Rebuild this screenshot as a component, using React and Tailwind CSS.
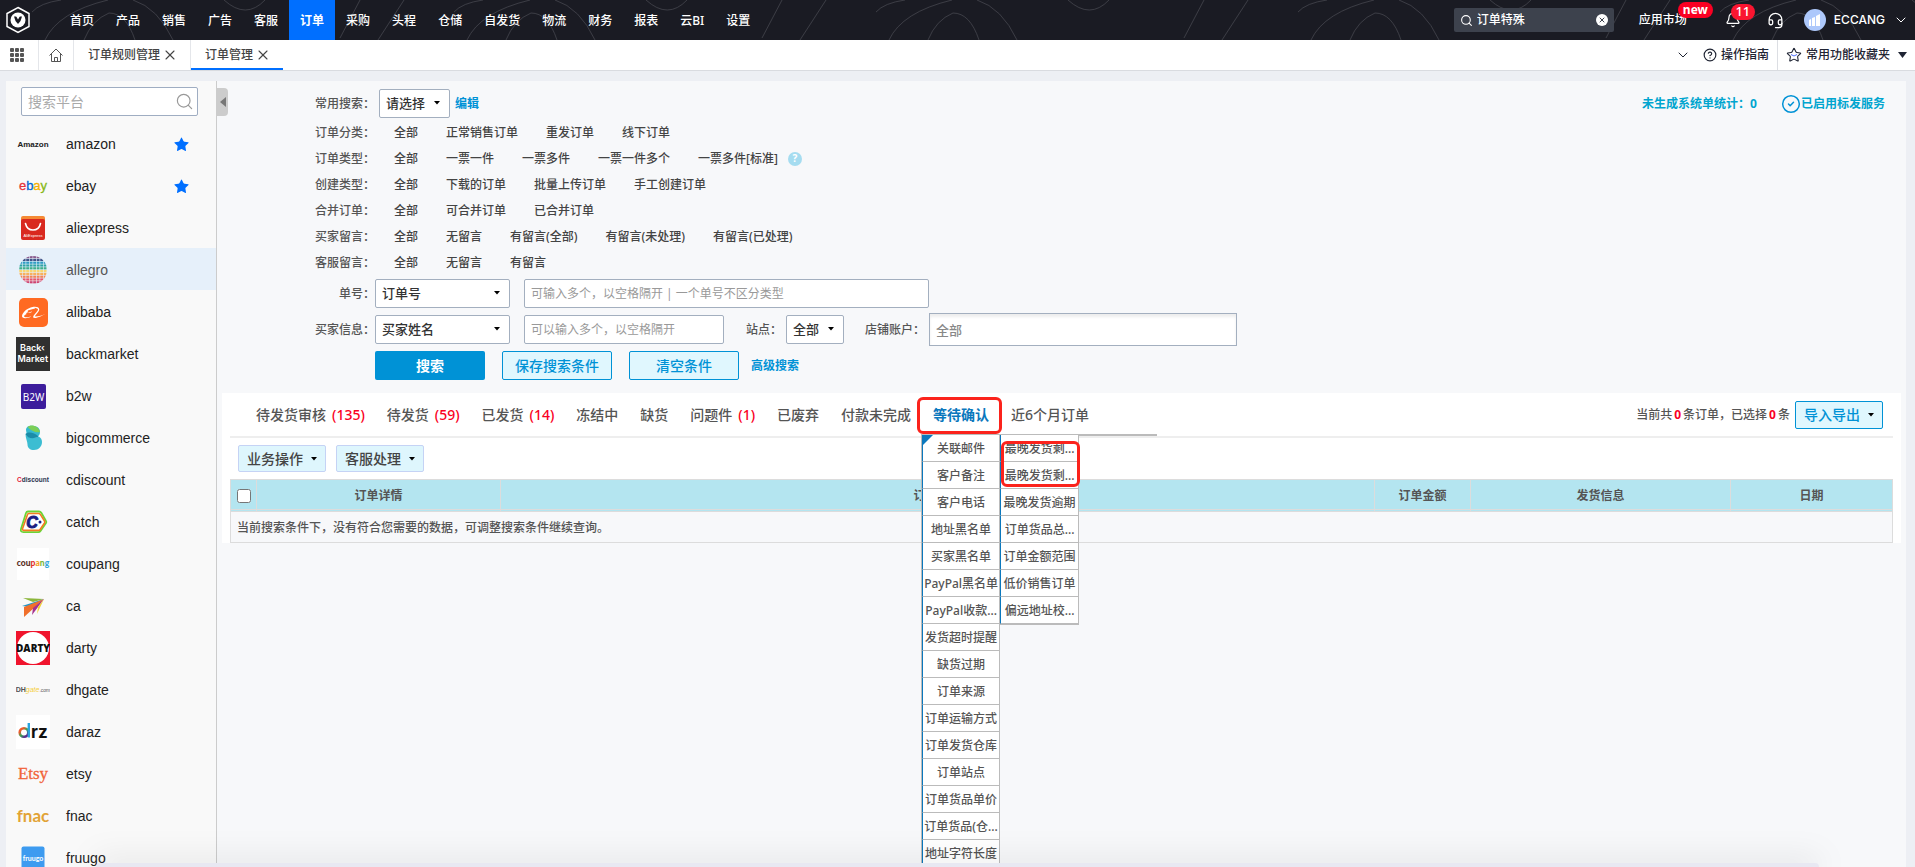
import { Bell, CheckCircle2, ChevronDown, CircleHelp, Headset, Search, Star, X } from 'lucide-react';
import { SiAlibabadotcom } from 'react-icons/si';

const NAV = ['首页', '产品', '销售', '广告', '客服', '订单', '采购', '头程', '仓储', '自发货', '物流', '财务', '报表', '云BI', '设置'];

// full-width punctuation
const COLON = '\uff1a';
const COMMA = '\uff0c';

const FILTERS = [
  { label: '订单分类', options: ['全部', '正常销售订单', '重发订单', '线下订单'] },
  { label: '订单类型', options: ['全部', '一票一件', '一票多件', '一票一件多个', '一票多件[标准]'], help: true },
  { label: '创建类型', options: ['全部', '下载的订单', '批量上传订单', '手工创建订单'] },
  { label: '合并订单', options: ['全部', '可合并订单', '已合并订单'] },
  { label: '买家留言', options: ['全部', '无留言', '有留言(全部)', '有留言(未处理)', '有留言(已处理)'] },
  { label: '客服留言', options: ['全部', '无留言', '有留言'] },
];

const STATUS_TABS = [
  { name: '待发货审核', count: 135 },
  { name: '待发货', count: 59 },
  { name: '已发货', count: 14 },
  { name: '冻结中' },
  { name: '缺货' },
  { name: '问题件', count: 1 },
  { name: '已废弃' },
  { name: '付款未完成' },
  { name: '等待确认', active: true },
  { name: '近6个月订单' },
];

const MENU_LEFT = [
  '关联邮件', '客户备注', '客户电话', '地址黑名单', '买家黑名单', 'PayPal黑名单', 'PayPal收款...', '发货超时提醒',
  '缺货过期', '订单来源', '订单运输方式', '订单发货仓库', '订单站点', '订单货品单价', '订单货品(仓...', '地址字符长度',
];

const MENU_RIGHT = ['最晚发货剩...', '最晚发货剩...', '最晚发货逾期', '订单货品总...', '订单金额范围', '低价销售订单', '偏远地址校...'];

const sans = 'Liberation Sans, sans-serif';

function Logo({ children }) {
  return (
    <svg viewBox="0 0 34 34" className="size-[34px] shrink-0" aria-hidden="true">
      {children}
    </svg>
  );
}

function AllegroLogo() {
  const colors = ['#8a5a8c', '#3f5488', '#2f9cc4', '#2fa3a6', '#3fae8c', '#f9d670', '#f8b15c', '#f0855a', '#e8566a', '#cf4470'];
  return (
    <Logo>
      <clipPath id="allegro-disc">
        <circle cx="17" cy="17" r="14" />
      </clipPath>
      <g clipPath="url(#allegro-disc)">
        {colors.map((color, row) =>
          [0, 1, 2, 3, 4, 5, 6, 7].map((col) => (
            <rect key={`${row}-${col}`} x={3.2 + col * 3.5} y={3 + row * 2.8} width="2.9" height="2.2" fill={color} />
          ))
        )}
      </g>
    </Logo>
  );
}

const PLATFORMS = [
  {
    name: 'amazon',
    starred: true,
    logo: (
      <Logo>
        <text x="17" y="20" textAnchor="middle" fontFamily={sans} fontWeight="700" fontSize="8" fill="#222">Amazon</text>
      </Logo>
    ),
  },
  {
    name: 'ebay',
    starred: true,
    logo: (
      <Logo>
        <text x="17" y="21" textAnchor="middle" fontFamily={sans} fontSize="13" strokeWidth="0.300">
          <tspan fill="#e53238" stroke="#e53238">e</tspan>
          <tspan fill="#0064d2" stroke="#0064d2">b</tspan>
          <tspan fill="#f5af02" stroke="#f5af02">a</tspan>
          <tspan fill="#86b817" stroke="#86b817">y</tspan>
        </text>
      </Logo>
    ),
  },
  {
    name: 'aliexpress',
    logo: (
      <Logo>
        <rect x="5" y="5" width="24" height="12" rx="2" fill="#f58a34" />
        <rect x="5" y="8" width="24" height="21" rx="2" fill="#d9291f" />
        <path d="M9.5 12.5c1 4.500 4 6.500 7.500 6.500s6.500-2 7.500-6.500" fill="none" stroke="#fff" strokeWidth="1.600" strokeLinecap="round" />
        <text x="17" y="26" textAnchor="middle" fontFamily={sans} fontSize="4" fill="#fff">AliExpress</text>
      </Logo>
    ),
  },
  { name: 'allegro', active: true, logo: <AllegroLogo /> },
  {
    name: 'alibaba',
    logo: (
      <span className="grid size-[34px] shrink-0 place-items-center">
        <span className="grid size-[29px] place-items-center rounded-[5px] bg-[#ff6a22]">
          <SiAlibabadotcom className="size-[23px] text-white" />
        </span>
      </span>
    ),
  },
  {
    name: 'backmarket',
    logo: (
      <Logo>
        <rect width="34" height="34" fill="#303030" />
        <g fontFamily="Inter, sans-serif" fontSize="9" fontWeight="600" fill="#fff">
          <text x="4" y="14">Back‹</text>
          <text x="1.500" y="25">Market</text>
        </g>
      </Logo>
    ),
  },
  {
    name: 'b2w',
    logo: (
      <Logo>
        <rect x="5" y="5" width="25" height="25" rx="2" fill="#3d1d9c" />
        <text x="17.5" y="21.500" textAnchor="middle" fontFamily="Noto Sans, sans-serif" fontSize="10" fill="#fff">B2W</text>
      </Logo>
    ),
  },
  {
    name: 'bigcommerce',
    logo: (
      <Logo>
        <path d="M10 9c0-4 4-5 8-4 4 .5 6 3 6 6 0 2-1 4-3 5l-10-1z" fill="#35b9cf" />
        <path d="M11.500 6c3-3 11-2 12.500 5-4 1-9-1-12.500-5z" fill="#7ccf57" />
        <path d="M9.500 13c2 4 8 5 13 2.500 2.500 1 3.500 3 3.500 5.500 0 4.500-3.500 8-8 8-4 0-6.500-2-6.500-5.500 0-3-2-6-2-10.500z" fill="#3cbdd2" />
        <path d="M9.500 13c1-2 8-3 13 2.500-5 3-11.500 2-13-2.500z" fill="#1b8ca8" />
      </Logo>
    ),
  },
  {
    name: 'cdiscount',
    logo: (
      <Logo>
        <text x="17" y="19" textAnchor="middle" fontFamily={sans} fontWeight="700" fontSize="6.500" fill="#2a3550">
          <tspan fill="#e5203a">C</tspan>discount
        </text>
      </Logo>
    ),
  },
  {
    name: 'catch',
    logo: (
      <Logo>
        <path d="M10 8q.5-1.500 2-1.500h11q1.500 0 2.300 1.200L30 16q.7 1 0 2l-5.500 8q-.8 1.200-2.300 1.200H7.500Q4 27 5 24z" fill="#fff" stroke="#6bd534" strokeWidth="1.800" />
        <path d="M11.500 9.500q.2-1 1.200-1h10q1 0 1.600.9L28.500 16q.6 1 0 2l-4.400 6.500q-.6.9-1.600.9H8q-2 0-1.400-2z" fill="#fff" stroke="#f47b20" strokeWidth="1.600" />
        <text x="16" y="22.500" textAnchor="middle" fontFamily={sans} fontWeight="700" fontStyle="italic" fontSize="16" fill="#1b1e82" stroke="#1b1e82">C</text>
        <circle cx="24" cy="17" r="1.500" fill="#1b1e82" />
      </Logo>
    ),
  },
  {
    name: 'coupang',
    logo: (
      <Logo>
        <rect x="1" y="1" width="32" height="32" fill="#fff" />
        <text x="17" y="19" textAnchor="middle" fontFamily="Lato, sans-serif" fontWeight="900" fontSize="8.500">
          <tspan fill="#5a2f24">cou</tspan>
          <tspan fill="#e2332b">p</tspan>
          <tspan fill="#f4a428">a</tspan>
          <tspan fill="#7cb83a">n</tspan>
          <tspan fill="#35a6dc">g</tspan>
        </text>
      </Logo>
    ),
  },
  {
    name: 'ca',
    logo: (
      <Logo>
        <path d="M7 9l21 1-11 3z" fill="#8cb63c" />
        <path d="M6 17l22-7-14 8z" fill="#2396c8" />
        <path d="M8 28V18l20-8z" fill="#f0702c" />
        <path d="M16 26l1-7 11-9z" fill="#a5318f" />
        <path d="M21 25l1-7 6-8z" fill="#f2d233" />
      </Logo>
    ),
  },
  {
    name: 'darty',
    logo: (
      <Logo>
        <rect width="34" height="34" fill="#f0142d" />
        <circle cx="17" cy="17" r="16" fill="#fff" />
        <text x="17" y="21" textAnchor="middle" fontFamily="Open Sans, sans-serif" fontWeight="800" fontSize="10" fill="#111">DARTY</text>
      </Logo>
    ),
  },
  {
    name: 'dhgate',
    logo: (
      <Logo>
        <text x="17" y="19" textAnchor="middle" fontFamily={sans} fontSize="7" fill="#555">
          <tspan fontWeight="700">DH</tspan>
          <tspan fill="#f5cf3d" fontStyle="italic">gate</tspan>
          <tspan fontSize="5">.com</tspan>
        </text>
      </Logo>
    ),
  },
  {
    name: 'daraz',
    logo: (
      <Logo>
        <linearGradient id="daraz-d" x1="0" y1="0" x2="1" y2="1">
          <stop offset="0.2" stopColor="#f0592b" />
          <stop offset="0.5" stopColor="#35a853" />
          <stop offset="0.8" stopColor="#5b2a90" />
        </linearGradient>
        <rect width="34" height="34" fill="#fff" />
        <circle cx="8" cy="17.500" r="4.300" fill="none" stroke="url(#daraz-d)" strokeWidth="2.600" />
        <path d="M12.800 8v14.500" stroke="#2aa4dd" strokeWidth="2.400" />
        <text x="15" y="22.500" fontFamily="Inter, sans-serif" fontWeight="700" fontSize="17" fill="#111">rz</text>
      </Logo>
    ),
  },
  {
    name: 'etsy',
    logo: (
      <Logo>
        <text x="17" y="22" textAnchor="middle" fontFamily="Liberation Serif, serif" fontSize="17" fill="#f1643a" stroke="#f1643a" strokeWidth="0.300">Etsy</text>
      </Logo>
    ),
  },
  {
    name: 'fnac',
    logo: (
      <Logo>
        <text x="17" y="23" textAnchor="middle" fontFamily="Lato, sans-serif" fontWeight="700" fontSize="17" fill="#e2a336">fnac</text>
      </Logo>
    ),
  },
  {
    name: 'fruugo',
    logo: (
      <Logo>
        <rect x="5.500" y="5.500" width="23" height="24" rx="2" fill="#3d9bf0" />
        <text x="17" y="19.500" textAnchor="middle" fontFamily="Lato, sans-serif" fontWeight="700" fontSize="7" fill="#fff">fruugo</text>
      </Logo>
    ),
  },
];

function Caret({ className = '' }) {
  return (
    <svg viewBox="0 0 6 4" className={`h-1 w-1.5 ${className}`} fill="#000" aria-hidden="true">
      <path d="M0 0h6L3 3.500z" />
    </svg>
  );
}

function Select({ label, value, className }) {
  return (
    <span className={`relative shrink-0 ${className}`}>
      <select
        aria-label={label}
        className="h-[29px] w-full appearance-none rounded-xs border border-[#a3afbf] bg-white pl-1.5 text-[13px] text-[#333] outline-none"
      >
        <option>{value}</option>
      </select>
      <Caret className="pointer-events-none absolute top-3 right-2.5" />
    </span>
  );
}

function HeaderLines() {
  return (
    <svg className="pointer-events-none absolute inset-0 h-full w-full" aria-hidden="true">
      <defs>
        <pattern id="header-lines" width="422" height="40" patternUnits="userSpaceOnUse">
          <g fill="none" stroke="#3b3c44" strokeWidth="1">
            <path d="M32 12Q40 3 61 0" />
            <path d="M84 40q8-20 25-27 17 0 26 27" />
            <path d="M133 0q25 8 40 40" />
            <path d="M45 40Q58 12 108 0" />
            <path d="M224 0q22 20 41 0" />
            <path d="M340 38L360 0" />
            <path d="M378 40L404 0" />
          </g>
        </pattern>
      </defs>
      <rect width="100%" height="100%" fill="url(#header-lines)" />
    </svg>
  );
}

function Header() {
  return (
    <header className="relative flex h-10 shrink-0 items-center bg-[#1a1b23] text-xs text-white">
      <HeaderLines />
      <a href="#" aria-label="ECCANG" className="relative ml-1.5 w-[53px]">
        <svg viewBox="0 0 24 28" className="h-7 w-6" aria-hidden="true">
          <path d="M12 1.500l11 6v13l-11 6-11-6v-13z" fill="none" stroke="#fff" strokeWidth="1.500" />
          <circle cx="12" cy="14" r="7.500" fill="#fff" />
          <path d="M8 10.500h8L14.500 15 12 18 9.500 15z" fill="#1a1b23" />
          <path d="M10 10l2 3.500 2-3.500z" fill="#fff" />
        </svg>
      </a>
      <nav className="relative flex h-full">
        {NAV.map((item) => (
          <a
            key={item}
            href="#"
            className={`flex items-center px-[11px] pt-0.5 ${item === '订单' ? 'bg-[#006fff] font-bold' : 'font-medium'}`}
          >
            {item}
          </a>
        ))}
      </nav>

      <div className="relative ml-auto flex h-full items-center pr-1.5">
        <label className="flex h-6 w-40 items-center rounded-xs bg-[#3d424d] px-1.5">
          <Search size={13} strokeWidth={2} />
          <input aria-label="搜索菜单" defaultValue="订单特殊" className="ml-1 w-0 flex-1 bg-transparent font-medium outline-none" />
          <span className="grid size-3 place-items-center rounded-full bg-white text-[#3d424d]">
            <X size={8} strokeWidth={3} />
          </span>
        </label>
        <a href="#" className="relative ml-[25px] font-medium">
          应用市场
          <span className="absolute -top-2.5 left-[39px] flex h-4 items-center rounded-full bg-[#fa0023] px-[5px] font-bold">new</span>
        </a>
        <button type="button" aria-label="通知" className="relative ml-[38px]">
          <Bell size={16} strokeWidth={1.8} />
          <span className="absolute -top-2 left-1.5 flex h-4 w-6 items-center justify-center rounded-full bg-[#fa1530] text-[13px]">11</span>
        </button>
        <button type="button" aria-label="客服" className="ml-[26px]">
          <Headset size={17} strokeWidth={1.8} />
        </button>
        <span className="ml-5 grid size-[22px] place-items-center rounded-full bg-[#adc8fb]">
          <svg viewBox="0 0 12 12" className="size-3" fill="#fff" aria-hidden="true">
            <path d="M0 6l2-1v7H0zM3 4l3-1v9H3zM7 2l4-2v12H7z" />
          </svg>
        </span>
        <span className="ml-2 font-['Inter'] text-xs font-medium">ECCANG</span>
        <ChevronDown size={16} strokeWidth={1.5} className="ml-2" />
      </div>
    </header>
  );
}

function PageTabs() {
  return (
    <div className="flex h-[31px] shrink-0 items-stretch border-b border-[#d9dbe0] bg-white text-xs text-[#444]">
      <button type="button" aria-label="全部菜单" className="grid w-[39px] place-items-center border-r border-[#e4e6ea] pr-1">
        <svg viewBox="0 0 14 14" className="size-3.5" fill="#555" aria-hidden="true">
          {[0, 5, 10].map((y) => [0, 5, 10].map((x) => <rect key={`${x}-${y}`} x={x} y={y} width="4" height="4" rx="1" />))}
        </svg>
      </button>
      <a href="#" aria-label="首页" className="grid w-[35px] place-items-center border-r border-[#e4e6ea]">
        <svg viewBox="0 0 14 14" className="size-3.5" fill="none" stroke="#555" strokeWidth="1" strokeLinejoin="round" aria-hidden="true">
          <path d="M.5 7.500L7 1l6.500 6.500M2.500 6v7.500h9V6M5.500 13.500v-4h3v4" />
        </svg>
      </a>
      <div className="flex items-center gap-0.5 border-r border-[#e4e6ea] pr-3 pl-3.5">
        <a href="#">订单规则管理</a>
        <button type="button" aria-label="关闭 订单规则管理">
          <X size={16} strokeWidth={1.6} />
        </button>
      </div>
      <div className="flex items-center gap-0.5 border-b-2 border-[#006fff] pt-0.5 pr-3 pl-3.5">
        <a href="#">订单管理</a>
        <button type="button" aria-label="关闭 订单管理">
          <X size={16} strokeWidth={1.6} />
        </button>
      </div>
      <div className="ml-auto flex items-center font-medium text-[#1f2433]">
        <ChevronDown size={16} strokeWidth={1.5} />
        <a href="#" className="ml-3 flex items-center gap-1">
          <CircleHelp size={14} strokeWidth={2} />
          操作指南
        </a>
        <button type="button" className="ml-2 flex h-full items-center gap-1 border-l border-[#dcdee3] pr-2 pl-2">
          <span className="relative">
            <Star size={16} strokeWidth={1.6} />
            <svg viewBox="0 0 6 3" className="absolute top-[7px] left-1 h-[3px] w-2" fill="none" stroke="#4b6bfb" strokeWidth="1" aria-hidden="true">
              <path d="M0 .5q3 3 6 0" />
            </svg>
          </span>
          常用功能收藏夹
          <svg viewBox="0 0 9 6" className="ml-1 h-1.5 w-[9px]" fill="#1f2433" aria-hidden="true">
            <path d="M0 0h9L4.500 6z" />
          </svg>
        </button>
      </div>
    </div>
  );
}

function Sidebar() {
  return (
    <aside className="flex w-[211px] shrink-0 flex-col overflow-hidden border-r border-[#ccc] bg-[#f9f9f9] pt-1.5">
      <label className="mx-[15px] mr-[18px] flex h-[29px] shrink-0 items-center rounded-xs border border-[#9fadc2] bg-white pr-[3px] pl-1.5">
        <input
          aria-label="搜索平台"
          placeholder="搜索平台"
          className="w-0 flex-1 text-sm font-normal outline-none placeholder:text-[#aaa]"
        />
        <Search size={19} strokeWidth={1.5} color="#999" />
      </label>
      <ul className="mt-1.5">
        {PLATFORMS.map((platform) => (
          <li key={platform.name}>
            <a
              href="#"
              className={`flex h-[42px] items-center pt-0.5 pr-[26px] pl-2.5 font-['Liberation_Sans'] text-sm font-normal ${
                platform.active ? 'bg-[#e6f0fa] text-[#555]' : 'text-[#222]'
              }`}
            >
              {platform.logo}
              <span className="ml-4">{platform.name}</span>
              {platform.starred && <Star size={17} fill="#006fff" strokeWidth={0} className="ml-auto" />}
            </a>
          </li>
        ))}
      </ul>
    </aside>
  );
}

function RowLabel({ children, htmlFor }) {
  return (
    <label htmlFor={htmlFor} className="w-[158px] shrink-0 text-right">
      {children}
      {COLON}
    </label>
  );
}

function SearchForm() {
  const field = 'rounded-xs border border-[#a3afbf] bg-white px-1.5 text-xs font-normal outline-none placeholder:text-[#999]';
  const outline = 'h-[29px] w-[110px] rounded-xs border border-[#0092d6] bg-[#e0f7fe] text-sm font-medium text-[#0092d6]';
  return (
    <form className="pt-2" onSubmit={(e) => e.preventDefault()}>
      <div className="flex h-[29px] items-center">
        <RowLabel>常用搜索</RowLabel>
        <Select label="常用搜索" value="请选择" className="ml-1 w-[71px]" />
        <a href="#" className="ml-[5px] font-bold text-[#0092d6]">编辑</a>
        <a href="#" className="ml-auto font-bold text-[#00a5cf]">未生成系统单统计{COLON}0</a>
        <a href="#" className="mr-[21px] ml-6 flex items-center font-bold text-[#00a5cf]">
          <CheckCircle2 size={20} strokeWidth={1.8} color="#0092d6" />
          已启用标发服务
        </a>
      </div>

      <div className="mt-0.5">
        {FILTERS.map((row) => (
          <div key={row.label} className="flex h-[26px] items-center">
            <RowLabel>{row.label}</RowLabel>
            <div className="ml-[19px] flex gap-7">
              {row.options.map((option) => (
                <a key={option} href="#" className="text-[#444]">{option}</a>
              ))}
            </div>
            {row.help && (
              <span className="ml-2.5 grid size-3.5 place-items-center rounded-full bg-[#a5dcf0] text-[10px] font-bold text-white">?</span>
            )}
          </div>
        ))}
      </div>

      <div className="mt-[3px] flex flex-col gap-[5px]">
        <div className="flex items-center">
          <RowLabel htmlFor="order-no">单号</RowLabel>
          <Select label="单号类型" value="订单号" className="w-[135px]" />
          <input
            id="order-no"
            placeholder={`可输入多个${COMMA}以空格隔开 | 一个单号不区分类型`}
            className={`ml-3.5 h-[29px] w-[405px] ${field}`}
          />
        </div>
        <div className="flex items-center">
          <RowLabel htmlFor="buyer">买家信息</RowLabel>
          <Select label="买家信息类型" value="买家姓名" className="w-[135px]" />
          <input id="buyer" placeholder={`可以输入多个${COMMA}以空格隔开`} className={`ml-3.5 h-[29px] w-[200px] ${field}`} />
          <span className="ml-[22px] w-10">站点{COLON}</span>
          <Select label="站点" value="全部" className="w-[58px]" />
          <label htmlFor="shop" className="ml-[21px] w-16">店铺账户{COLON}</label>
          <input
            id="shop"
            placeholder="全部"
            className="h-[33px] w-[308px] border border-[#a3afbf] bg-white px-1.5 text-[13px] shadow-[inset_0_3px_3px_#eee] outline-none placeholder:text-[#888]"
          />
        </div>
        <div className="flex items-center pl-[158px]">
          <button type="submit" className="h-[29px] w-[110px] rounded-xs bg-[#0092d6] text-sm font-bold text-white">搜索</button>
          <button type="reset" className={`ml-[17px] ${outline}`}>保存搜索条件</button>
          <button type="reset" className={`ml-[17px] ${outline}`}>清空条件</button>
          <a href="#" className="ml-3 font-bold text-[#0092d6]">高级搜索</a>
        </div>
      </div>
    </form>
  );
}

function MenuColumn({ items, className = '' }) {
  return (
    <ul className={`w-[79px] shrink-0 border-t border-r border-[#bbb] bg-white ${className}`}>
      {items.map((item, i) => (
        <li key={i} className="h-[27px] overflow-hidden border-b border-l border-b-[#bbb] border-l-[#0b78bd]">
          <a href="#" className="flex h-full items-center justify-center pt-0.5 whitespace-nowrap">{item}</a>
        </li>
      ))}
    </ul>
  );
}

function WaitingMenu() {
  return (
    <div className="absolute top-[41px] -left-3 z-10 flex items-start text-xs font-medium text-[#555]">
      <MenuColumn items={MENU_LEFT} className="border-l" />
      <MenuColumn items={MENU_RIGHT} className="border-b" />
      <div className="w-[78px] border-t-2 border-[#bbb]" />
      <svg viewBox="0 0 11 11" className="absolute top-px left-px size-[11px]" fill="#0b78bd" aria-hidden="true">
        <path d="M0 0h11L0 11z" />
      </svg>
      {/* red mark around the last-shipping entries */}
      <div className="pointer-events-none absolute top-[7px] left-20 h-[46px] w-[79px] rounded-md border-3 border-[#fb231c]" />
    </div>
  );
}

function StatusTabs() {
  return (
    <div className="mx-2 flex h-[45px] items-stretch border-b-2 border-[#eee]">
      <ul className="flex gap-[22px] pl-[26px] text-sm text-[#555]">
        {STATUS_TABS.map((tab) => (
          <li key={tab.name} className={`relative flex items-center whitespace-nowrap ${tab.active ? 'font-bold' : ''}`}>
            <a href="#" className={tab.active ? 'text-[#0b78bd]' : ''}>
              {tab.name}
              {tab.count && <span className="ml-1.5 text-[#fa0023]">({tab.count})</span>}
            </a>
            {tab.active && (
              <>
                <WaitingMenu />
                <div className="pointer-events-none absolute top-1 -right-[13px] -left-4 z-20 h-[37px] rounded-md border-3 border-[#fb231c]" />
              </>
            )}
          </li>
        ))}
      </ul>
      <div className="ml-auto flex items-center pr-2.5">
        <span>
          当前共<b className="mx-0.5 text-[#fa0023]">0</b>条订单{COMMA}已选择<b className="mx-0.5 text-[#fa0023]">0</b>条
        </span>
        <button
          type="button"
          className="ml-[5px] flex h-7 w-[88px] items-center justify-center gap-2 rounded-xs border border-[#0092d6] bg-[#e0f7fe] text-sm font-medium text-[#0092d6]"
        >
          导入导出
          <Caret />
        </button>
      </div>
    </div>
  );
}

function OrderTable() {
  const th = 'h-[33px] border-t border-l border-b-3 border-[#dcdcdc] bg-[#b4e5f0] pt-0.5 [border-bottom-style:double] font-bold';
  return (
    <table className="w-full table-fixed border-separate border-spacing-0 border-r border-[#dcdcdc]">
      <colgroup>
        <col className="w-[26px]" />
        <col className="w-[244px]" />
        <col />
        <col className="w-24" />
        <col className="w-[260px]" />
        <col className="w-[162px]" />
      </colgroup>
      <thead>
        <tr>
          <th className={th}>
            <input type="checkbox" aria-label="全选" className="mx-auto block size-3.5" />
          </th>
          <th className={th}>订单详情</th>
          <th className={th}>订单信息</th>
          <th className={th}>订单金额</th>
          <th className={th}>发货信息</th>
          <th className={th}>日期</th>
        </tr>
      </thead>
      <tbody>
        <tr>
          <td colSpan={6} className="h-[31px] border-b border-l border-[#dcdcdc] bg-[#f7f8fa] pt-0.5 pl-1.5">
            当前搜索条件下{COMMA}没有符合您需要的数据{COMMA}可调整搜索条件继续查询。
          </td>
        </tr>
      </tbody>
    </table>
  );
}

function Orders() {
  return (
    <section className="mx-[5px] mt-[13px] bg-white">
      <StatusTabs />
      <div className="flex gap-2.5 px-4 py-[7px]">
        {['业务操作', '客服处理'].map((name) => (
          <button
            key={name}
            type="button"
            className="flex h-[27px] w-[88px] items-center justify-center gap-2 rounded-xs border border-[#c5d3f5] bg-[#def6fd] text-sm text-[#444]"
          >
            {name}
            <Caret />
          </button>
        ))}
      </div>
      <div className="mx-2 -mb-[33px]">
        <OrderTable />
      </div>
    </section>
  );
}

export default function App() {
  return (
    <div className="relative flex h-screen flex-col overflow-hidden bg-[#edeff4] font-['Noto_Sans','Noto_Sans_CJK_SC',sans-serif] text-xs font-medium text-[#555]">
      <Header />
      <PageTabs />
      <div className="flex min-h-0 flex-1 pt-2.5 pr-[9px] pl-1.5">
        <Sidebar />
        <main className="relative min-w-0 flex-1 bg-[#f7f8fa]">
          <button
            type="button"
            aria-label="收起侧栏"
            className="absolute top-[7px] left-0 grid h-7 w-[11px] place-items-center rounded-r-sm bg-[#ccc]"
          >
            <svg viewBox="0 0 6 10" className="h-2.5 w-1.5" fill="#777" aria-hidden="true">
              <path d="M6 0v10L0 5z" />
            </svg>
          </button>
          <SearchForm />
          <Orders />
        </main>
      </div>
      {/* top edge of the docked panel below */}
      <div className="pointer-events-none absolute inset-x-24 bottom-0 z-30 h-1 rounded-t-xl bg-[#e8e8f2] shadow-[0_0_30px_rgba(0,0,0,0.35)]" />
    </div>
  );
}
